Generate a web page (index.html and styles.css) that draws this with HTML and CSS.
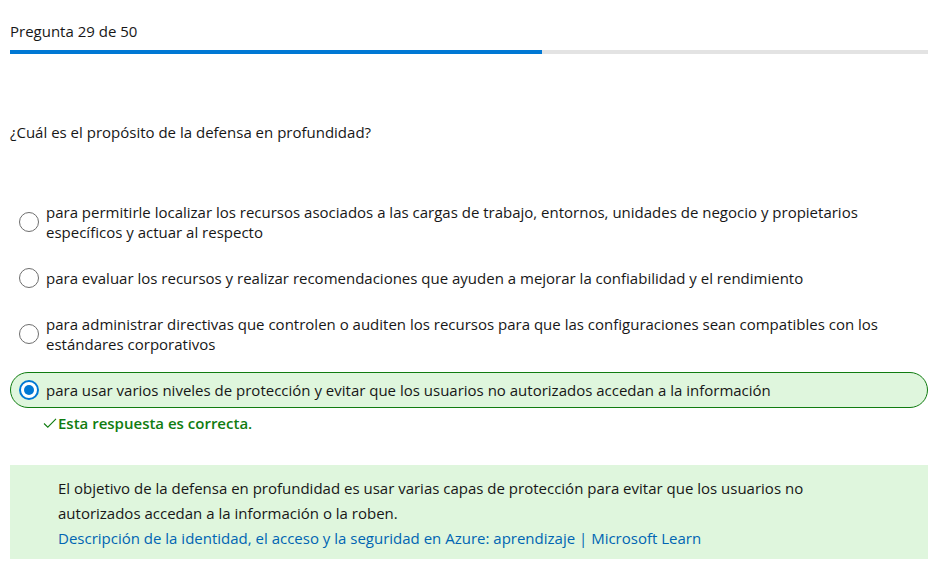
FILE: index.html
```html
<!DOCTYPE html>
<html lang="es">
<head>
<meta charset="utf-8">
<link rel="stylesheet" href="styles.css">
</head>
<body>
<div class="quiz">
  <div class="counter">Pregunta 29 de 50</div>
  <div class="progress"><div class="progress-fill" style="width:58%"></div></div>

  <p class="question">¿Cuál es el propósito de la defensa en profundidad?</p>

  <div class="options">
    <div class="option">
      <span class="radio"></span>
      <span class="label">para permitirle localizar los recursos asociados a las cargas de trabajo, entornos, unidades de negocio y propietarios específicos y actuar al respecto</span>
    </div>
    <div class="option">
      <span class="radio"></span>
      <span class="label">para evaluar los recursos y realizar recomendaciones que ayuden a mejorar la confiabilidad y el rendimiento</span>
    </div>
    <div class="option">
      <span class="radio"></span>
      <span class="label">para administrar directivas que controlen o auditen los recursos para que las configuraciones sean compatibles con los estándares corporativos</span>
    </div>
    <div class="option selected">
      <span class="radio checked"></span>
      <span class="label">para usar varios niveles de protección y evitar que los usuarios no autorizados accedan a la información</span>
    </div>
  </div>

  <div class="feedback">
    <svg class="check" width="14" height="12" viewBox="0 0 14 12"><path d="M1 6.5 L4.8 10.2 L13 1.8" fill="none" stroke="#107c10" stroke-width="1.1"/></svg>
    <span>Esta respuesta es correcta.</span>
  </div>

  <div class="explanation">
    <p>El objetivo de la defensa en profundidad es usar varias capas de protección para evitar que los usuarios no autorizados accedan a la información o la roben.</p>
    <a class="link" href="#">Descripción de la identidad, el acceso y la seguridad en Azure: aprendizaje | Microsoft Learn</a>
  </div>
</div>
</body>
</html>
```

FILE: styles.css
```css
* { box-sizing: border-box; }
html, body { margin: 0; padding: 0; background: #fff; }
body {
  font-family: "Segoe UI", "Open Sans", "Noto Sans", sans-serif;
  font-size: 15px;
  color: #171717;
}
.quiz {
  width: 918px;
  margin-left: 10px;
  padding-top: 20px;
}
.counter {
  line-height: 22px;
}
.progress {
  margin-top: 8px;
  height: 4px;
  background: #e3e3e3;
}
.progress-fill {
  height: 4px;
  background: #0078d4;
}
.question {
  margin: 67px 0 0;
  line-height: 22px;
}
.options {
  margin-top: 51px;
  display: flex;
  flex-direction: column;
  gap: 10px;
}
.option {
  display: flex;
  align-items: center;
  gap: 7px;
  padding: 7px 8px;
  line-height: 20px;
  border: 1px solid transparent;
  border-radius: 18px;
}
.option.selected {
  background: #dff6dd;
  border-color: #107c10;
}
.radio {
  flex: none;
  width: 20px;
  height: 20px;
  border: 1px solid #6e6e6e;
  border-radius: 50%;
  background: #fff;
  position: relative;
}
.radio.checked {
  border: 2px solid #0078d4;
}
.radio.checked::after {
  content: "";
  position: absolute;
  left: 3px;
  top: 3px;
  width: 10px;
  height: 10px;
  border-radius: 50%;
  background: #0078d4;
}
.feedback {
  display: flex;
  align-items: center;
  gap: 1px;
  margin: 4px 0 0 33px;
  color: #107c10;
  font-weight: 600;
  line-height: 22px;
}
.explanation {
  margin-top: 31px;
  background: #dff6dd;
  padding: 11px 100px 8px 48px;
  line-height: 25px;
}
.explanation p { margin: 0; }
.link {
  color: #0065b3;
  text-decoration: none;
}
```
